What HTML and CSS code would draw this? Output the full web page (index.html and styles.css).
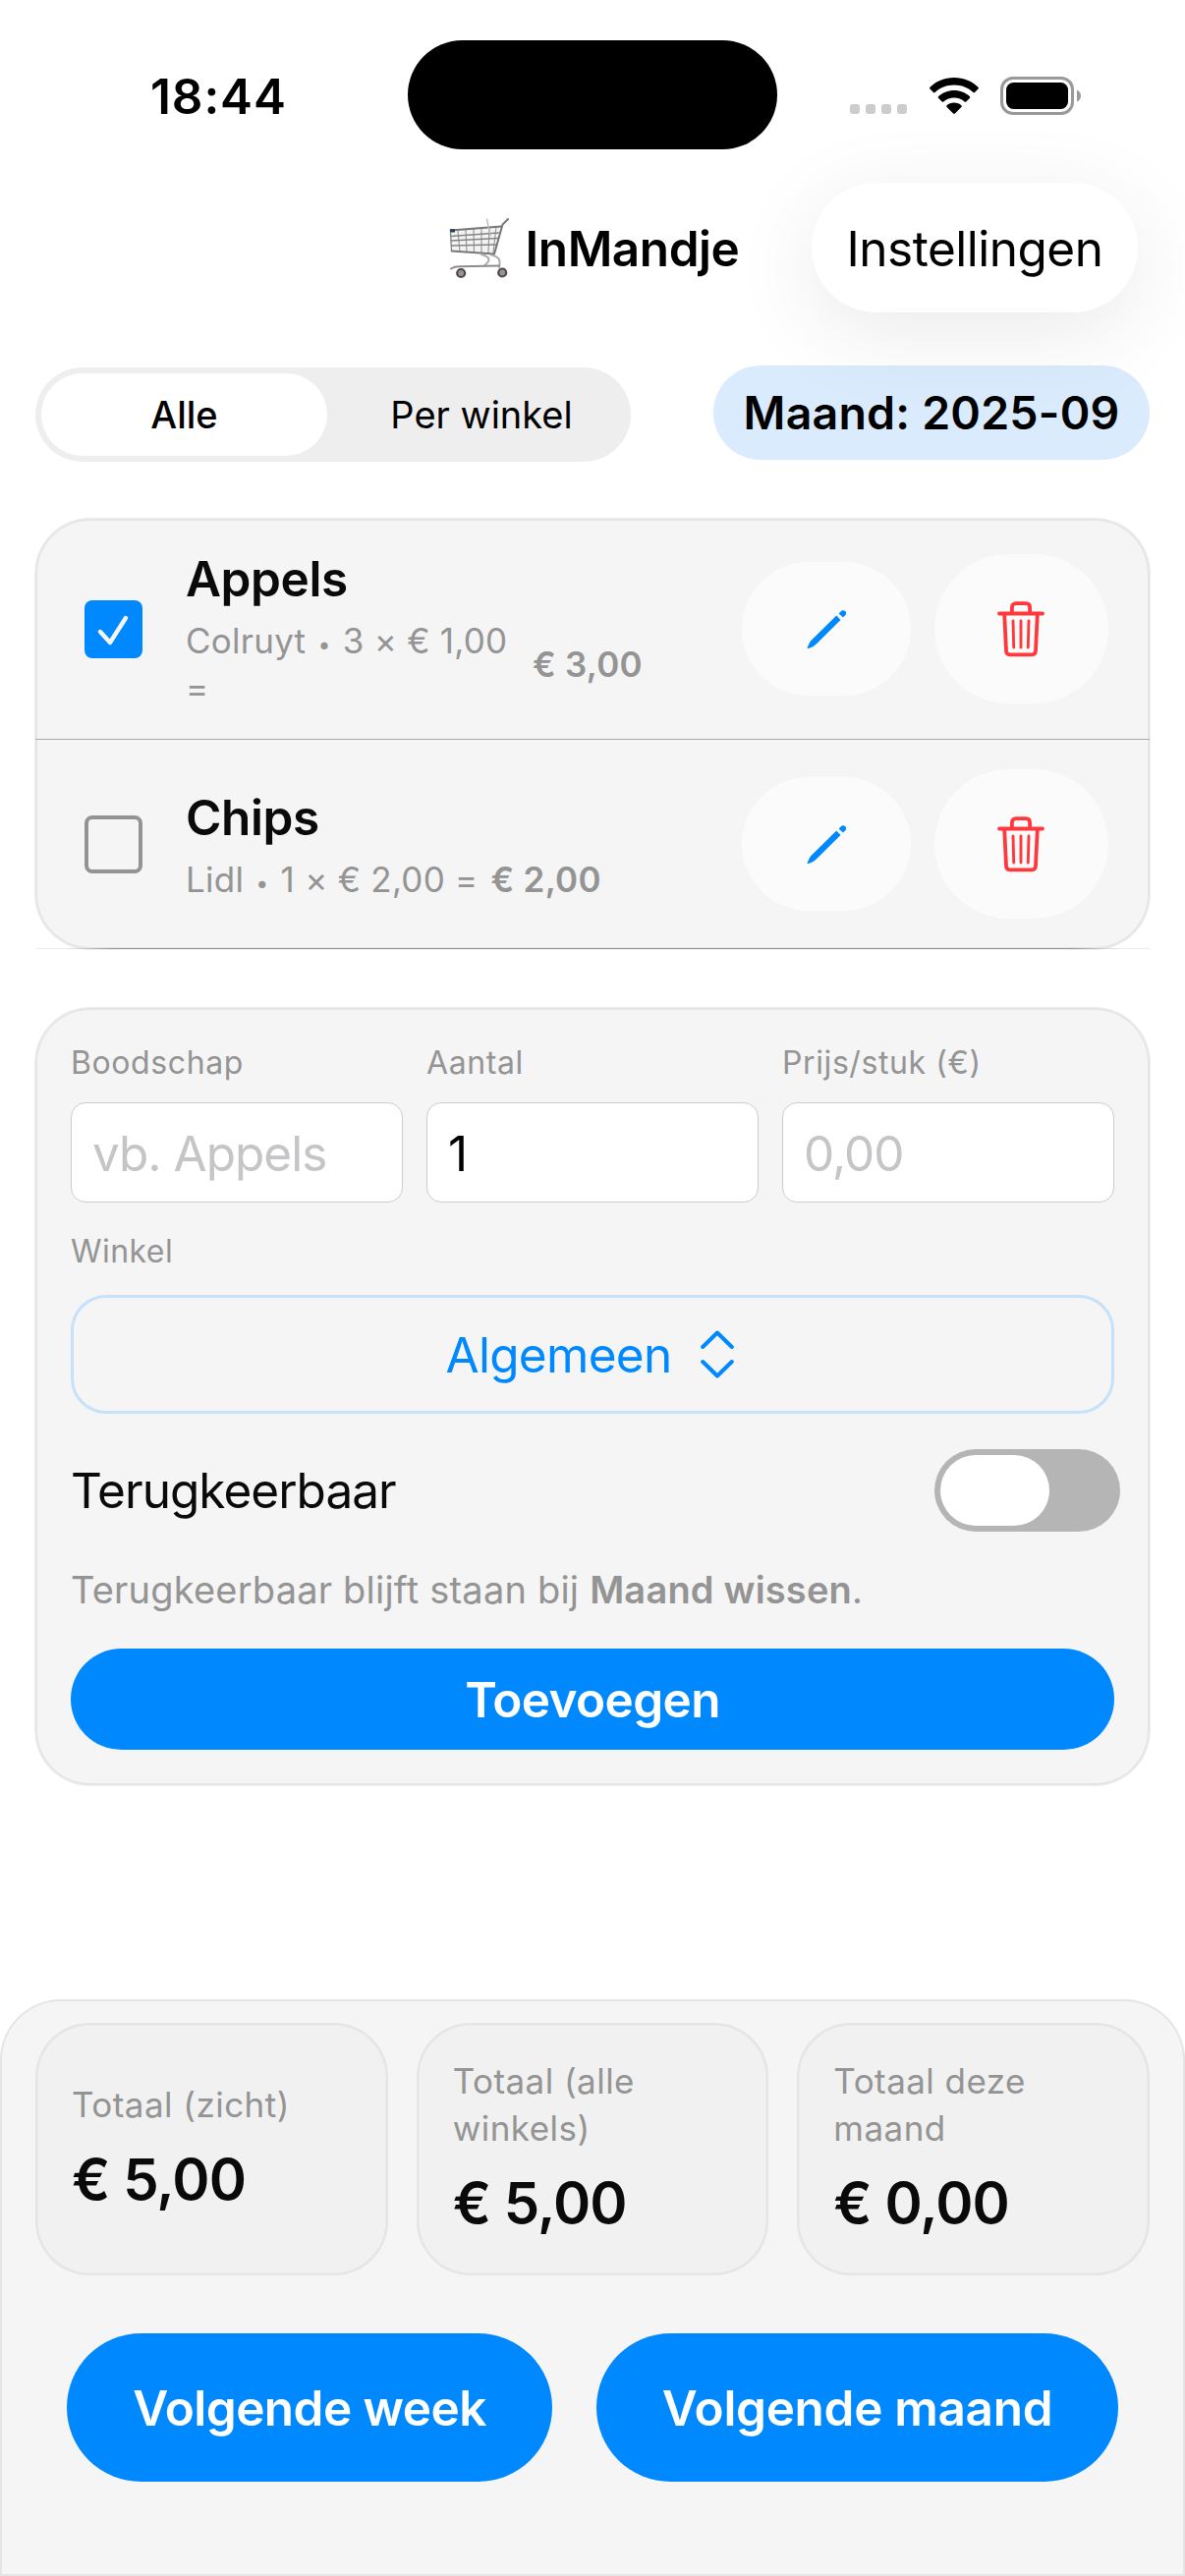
FILE: index.html
```html
<!DOCTYPE html>
<html lang="nl">
<head>
<meta charset="utf-8">
<title>InMandje</title>
<link rel="stylesheet" href="styles.css">
</head>
<body>
<svg class="sprite" aria-hidden="true">
  <symbol id="pencil" viewBox="0 0 41 41">
    <path d="M30.3 6.600 L34.500 10.900 L9 36.300 Q7.500 37.700 5.200 38.700 L1.600 40 Q.2 40.300 .7 38.900 L2.400 35.200 Q3.400 33 4.700 31.800 Z M32.600 4.400 L34.500 2.400 Q36.800 .2 39.200 2 Q41.200 4.300 39 6.600 L37 8.600 Z"/>
  </symbol>
  <symbol id="trash" viewBox="0 0 48 57">
    <g fill="none" stroke="currentColor" stroke-linecap="round" stroke-linejoin="round">
      <path stroke-width="3.800" d="M2 12.500H46M7.200 13L9 50.500Q9.200 54.400 12.800 54.400H35.200Q38.800 54.400 39 50.500L40.800 13M14.900 12V6.500Q14.900 2.200 19 2.200H29Q33.100 2.200 33.100 6.500V12"/>
      <path stroke-width="2.900" d="M16 20L16.700 47M24 20V47M32 20L31.300 47"/>
    </g>
  </symbol>
</svg>

<header class="status">
  <span class="time">18:44</span>
  <span class="island"></span>
  <div class="indicators">
    <span class="cell"><i></i><i></i><i></i><i></i></span>
    <svg class="wifi" width="50" height="37" viewBox="0 0 50 37">
      <path d="M25 0C34.800 0 43.700 3.900 49.500 9.800Q50.300 10.700 49.500 11.500L46 15Q45.200 15.800 44.400 15C39.300 10.200 32.500 7.500 25 7.500S10.700 10.200 5.600 15Q4.800 15.800 4 15L.5 11.500Q-.3 10.700 .5 9.800C6.300 3.900 15.200 0 25 0Z"/>
      <path d="M25 13C31.300 13 37 15.400 41 19.200Q41.800 20 41 20.800L37.300 24.400Q36.500 25.200 35.700 24.500C32.800 22 29.100 20.500 25 20.500S17.200 22 14.300 24.500Q13.500 25.200 12.700 24.400L9 20.800Q8.200 20 9 19.200C13 15.400 18.700 13 25 13Z"/>
      <path d="M25 25.600C28 25.600 30.600 26.700 32.400 28.300Q33.200 29.100 32.400 29.900L25.900 36.500Q25 37.300 24.100 36.500L17.600 29.900Q16.800 29.100 17.600 28.300C19.400 26.700 22 25.600 25 25.600Z"/>
    </svg>
    <svg class="battery" width="82" height="39" viewBox="0 0 82 39">
      <rect x="1.500" y="1.500" width="72" height="36" rx="11.500" fill="none" stroke="#999" stroke-width="3"/>
      <rect x="6" y="6" width="63" height="27" rx="7.500"/>
      <path d="M78 13.500Q82 15.500 82 19.500T78 25.500Z" fill="#999"/>
    </svg>
  </div>
</header>

<nav class="nav">
  <h1 class="title">
    <svg class="cart" width="62" height="62" viewBox="0 0 62 62" fill="none" stroke-linecap="round">
      <path d="M1.500 13L53 8.500 46 36 2.500 33.500Z" fill="#f3f3f3" stroke="none"/>
      <path d="M9 13L11 34M17 12L18 34.500M25 11.500L25.500 35M33 11L33 35M41 10L40 35M48 9L45 35" stroke="#9a9a9a" stroke-width="1.200"/>
      <path d="M1.500 18.500L50.500 15M1.500 23L49.500 20.500M2 28L48 27M1.500 13.500L2.500 33.500" stroke="#858585" stroke-width="1.300"/>
      <path d="M1.500 12.500L53 8.500M2.500 33.500L46 36.500" stroke="#777" stroke-width="1.800"/>
      <path d="M38.500 1L42 18" stroke="#bbb" stroke-width="1.300"/>
      <path d="M60 1L54.500 6.500 46 36.500" stroke="#777" stroke-width="2"/>
      <path d="M33 37C44 40 41 44 36 48.500M43 37.500C53 40 52 44 51 50" stroke="#aaa" stroke-width="2"/>
      <path d="M2 51.500Q6 49 11 49.300L51 48.500" stroke="#8d8d8d" stroke-width="2"/>
      <path d="M1 11.200H6V14.500H1Z" fill="#27415c" stroke="none"/>
      <circle cx="12.200" cy="56" r="4" fill="#9b9393" stroke="#514949" stroke-width="2.200"/>
      <circle cx="54.200" cy="55.500" r="4" fill="#9b9393" stroke="#514949" stroke-width="2.200"/>
    </svg>
    <span>InMandje</span>
  </h1>
  <button class="settings">Instellingen</button>
</nav>

<section class="filters">
  <div class="segmented">
    <span class="segment active">Alle</span>
    <span class="segment">Per winkel</span>
  </div>
  <span class="month">Maand: 2025-09</span>
</section>

<section class="card list">
  <article class="row first">
    <span class="check on"><svg width="59" height="59" viewBox="0 0 59 59"><path d="M16 32L26 43 42 18" fill="none" stroke="#f5f5f5" stroke-width="4.400" stroke-linecap="round" stroke-linejoin="round"/></svg></span>
    <div class="item">
      <h2>Appels</h2>
      <p><span class="detail">Colruyt <i class="dot">•</i> 3 × € 1,00<br>=</span><b>€ 3,00</b></p>
    </div>
    <button class="edit"><svg width="41" height="41"><use href="#pencil"/></svg></button>
    <button class="delete"><svg width="48" height="57"><use href="#trash"/></svg></button>
  </article>
  <hr class="divider">
  <article class="row second">
    <span class="check"></span>
    <div class="item">
      <h2>Chips</h2>
      <p><span>Lidl <i class="dot">•</i> 1 × € 2,00 =</span><b>€ 2,00</b></p>
    </div>
    <button class="edit"><svg width="41" height="41"><use href="#pencil"/></svg></button>
    <button class="delete"><svg width="48" height="57"><use href="#trash"/></svg></button>
  </article>
  <hr class="divider last">
</section>

<section class="card form">
  <div class="fields">
    <div><div class="label">Boodschap</div><div class="input hint-text">vb. Appels</div></div>
    <div><div class="label">Aantal</div><div class="input">1</div></div>
    <div><div class="label">Prijs/stuk (€)</div><div class="input hint-text">0,00</div></div>
  </div>
  <div class="label shop">Winkel</div>
  <div class="picker"><span>Algemeen</span>
    <svg width="34" height="49" viewBox="0 0 34 49" fill="none" stroke="#08f" stroke-width="4" stroke-linecap="round" stroke-linejoin="round"><path d="M2.200 17L17 2.500 31.800 17M2.200 32L17 46.500 31.800 32"/></svg>
  </div>
  <div class="recurring"><span>Terugkeerbaar</span><span class="toggle"><i></i></span></div>
  <p class="note">Terugkeerbaar blijft staan bij <b>Maand wissen</b>.</p>
  <button class="primary add">Toevoegen</button>
</section>

<footer class="panel">
  <div class="totals">
    <div class="total"><span>Totaal (zicht)</span><strong>€ 5,00</strong></div>
    <div class="total"><span>Totaal (alle<br>winkels)</span><strong>€ 5,00</strong></div>
    <div class="total"><span>Totaal deze<br>maand</span><strong>€ 0,00</strong></div>
  </div>
  <div class="actions">
    <button class="primary week">Volgende week</button>
    <button class="primary next-month">Volgende maand</button>
  </div>
</footer>
</body>
</html>
```
FILE: styles.css
```css
* { box-sizing: border-box; margin: 0; padding: 0; }
body {
  width: 1206px; height: 2622px; overflow: hidden;
  display: flex; flex-direction: column;
  background: #fff; color: #000;
  font: 400 49.5px/60px Inter, "Liberation Sans", sans-serif;
}
button { border: 0; background: none; font: inherit; color: inherit; display: flex; align-items: center; justify-content: center; flex: none; }
svg { display: block; flex: none; }
.sprite { position: absolute; width: 0; height: 0; }

.status { height: 168px; flex: none; display: grid; grid-template-columns: 415px 376px 415px; align-items: start; }
.time { padding: 68px 0 0 153px; font-weight: 600; letter-spacing: .9px; }
.island { margin-top: 41px; height: 111px; border-radius: 56px; background: #000; }
.indicators { display: flex; align-items: flex-start; padding: 78px 0 0 74px; }
.cell { display: flex; gap: 6px; margin-top: 28px; }
.cell i { width: 10px; height: 10px; border-radius: 3px; background: #ccc; }
.wifi { margin: 1px 22px 0 22.500px; }

.nav { height: 168px; flex: none; padding: 0 48px; display: grid; grid-template-columns: 1fr auto 1fr; align-items: center; position: relative; z-index: 1; }
.title { grid-column: 2; display: flex; align-items: center; gap: 16px; padding: 1px 0 0 3px; font-size: 49.5px; font-weight: 600; letter-spacing: -.46px; }
.settings { justify-self: end; width: 332px; height: 132px; padding-top: 1px; border-radius: 66px; background: #fff; letter-spacing: -.5px; box-shadow: 0 20px 90px rgba(0,0,0,.085); }

.filters { margin-top: 36px; padding: 0 36px; height: 98px; flex: none; display: flex; justify-content: space-between; align-items: flex-start; }
.segmented { width: 606px; height: 96px; margin-top: 2px; padding: 6px; border-radius: 48px; background: #eee; display: grid; grid-template-columns: 291px 1fr; }
.segment { display: flex; align-items: center; justify-content: center; border-radius: 42px; font-size: 38px; }
.segment:last-child { padding-left: 11px; }
.segment.active { background: #fff; font-weight: 500; }
.month { width: 444px; height: 96px; border-radius: 48px; background: #d9ebfd; display: flex; align-items: center; justify-content: center; font-size: 46.5px; font-weight: 600; letter-spacing: .19px; }

.card { margin: 0 36px; flex: none; border-radius: 56px; background: #f5f5f5; box-shadow: 0 0 0 1px #ededed, inset 0 0 0 2px #e5e5e5; color: #0a0a0a; }
.list { margin-top: 58px; }
.row { display: flex; align-items: center; padding: 0 42px 0 50px; }
.row.first { height: 224px; }
.row.second { height: 212px; }
.check { width: 59px; height: 59px; border-radius: 8px; border: 4px solid #939393; flex: none; }
.check.on { border: 0; background: #08f; }
.item { flex: 1; padding: 3px 0 0 44px; }
.item h2 { font-size: 49.5px; line-height: 61px; font-weight: 600; letter-spacing: -.4px; }
.item p { margin-top: 8px; display: flex; align-items: center; gap: 13px; font-size: 35px; line-height: 48px; letter-spacing: .25px; color: #949494; white-space: nowrap; }
.item b, .note b { font-weight: 600; }
.detail { width: 340px; }
.dot { margin: 0 2px; font-size: 23px; line-height: 0; font-style: normal; vertical-align: 1.5px; }
.edit { width: 172px; height: 136px; border-radius: 68px; background: #fbfbfb; fill: #08f; }
.delete { width: 177px; height: 152px; margin-left: 24px; padding-right: 1px; border-radius: 76px; background: #fbfbfb; color: #ff383c; }
.divider { border: 0; height: 1px; background: #a9a9a9; }
.divider.last { background: linear-gradient(90deg, #ececec 30px, #999 80px, #999 1054px, #ececec 1104px); }

.form { margin-top: 60px; padding: 35px 36px 36px; }
.fields { display: grid; grid-template-columns: repeat(3, 1fr); gap: 24px; }
.label { padding-top: 1px; height: 40px; font-size: 32px; line-height: 40px; letter-spacing: .6px; color: #949494; }
.input { margin-top: 21px; height: 102px; padding: 1px 0 0 21px; border: 1px solid #ccc; border-radius: 15px; background: #fff; color: #000; display: flex; align-items: center; letter-spacing: -1px; }
.hint-text { color: #c5c5c7; }
.shop { margin-top: 30px; padding-top: 0; letter-spacing: .46px; }
.picker { margin-top: 24px; height: 121px; padding-right: 6px; border: 3px solid #c6e1fa; border-radius: 36px; display: flex; align-items: center; justify-content: center; gap: 29px; color: #08f; letter-spacing: -.7px; }
.recurring { margin: 36px -6px 0 0; height: 84px; display: flex; align-items: center; justify-content: space-between; letter-spacing: -.98px; }
.toggle { width: 189px; height: 84px; padding: 6px; border-radius: 42px; background: #b5b5b5; }
.toggle i { display: block; width: 111px; height: 72px; border-radius: 36px; background: #fff; }
.note { margin-top: 36px; font-size: 38px; line-height: 46px; letter-spacing: .2px; color: #949494; }
.primary { background: #08f; color: #fff; font-weight: 600; }
.add { margin-top: 37px; width: 100%; height: 103px; border-radius: 52px; letter-spacing: -.63px; }

.panel { margin-top: auto; height: 587px; flex: none; padding: 24px 36px 0; border-radius: 62px 62px 0 0; background: #f5f5f5; box-shadow: inset 0 0 0 2px #e5e5e5; color: #0a0a0a; }
.totals { display: grid; grid-template-columns: repeat(3, 1fr); gap: 29px; }
.total { height: 257px; padding: 0 0 3px 37px; border-radius: 55px; background: #f1f1f1; box-shadow: inset 0 0 0 2.500px #e5e5e5; display: flex; flex-direction: column; justify-content: center; gap: 16px; }
.total span { font-size: 35px; line-height: 48px; letter-spacing: .45px; color: #949494; }
.total strong { font-size: 58px; line-height: 72px; font-weight: 600; letter-spacing: -.9px; }
.actions { margin-top: 59px; display: flex; justify-content: center; gap: 45px; }
.actions .primary { height: 151px; border-radius: 76px; }
.week { width: 494px; letter-spacing: -.56px; }
.next-month { width: 531px; letter-spacing: -.32px; }
```
